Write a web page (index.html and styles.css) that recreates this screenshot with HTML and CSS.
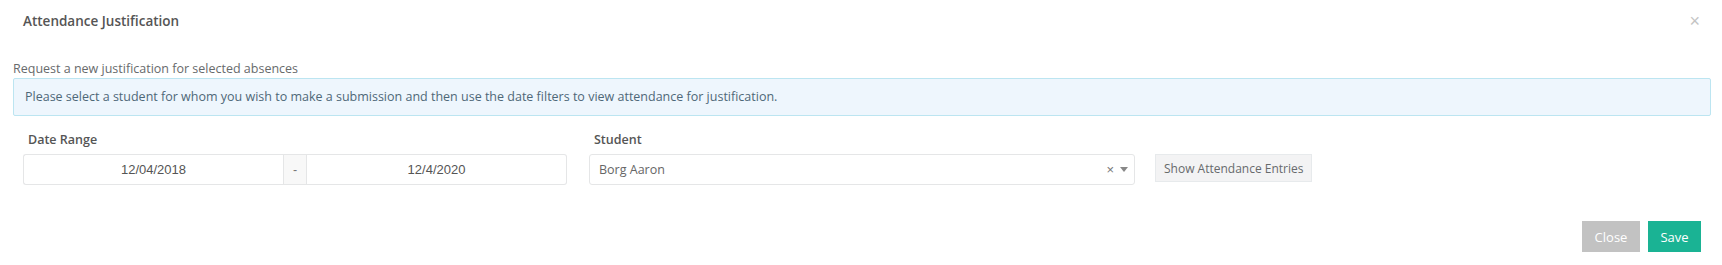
FILE: index.html
```html
<!DOCTYPE html>
<html lang="en">
<head>
<meta charset="utf-8">
<title>Attendance Justification</title>
<link rel="stylesheet" href="styles.css">
</head>
<body>
<div class="modal">
  <div class="modal-header">
    <h4 class="modal-title">Attendance Justification</h4>
    <span class="modal-close">&times;</span>
  </div>
  <div class="modal-body">
    <p class="intro">Request a new justification for selected absences</p>
    <div class="alert">Please select a student for whom you wish to make a submission and then use the date filters to view attendance for justification.</div>
    <div class="row">
      <div class="col">
        <label class="field-label">Date Range</label>
        <div class="date-group">
          <div class="date-input">12/04/2018</div>
          <div class="date-sep">-</div>
          <div class="date-input">12/4/2020</div>
        </div>
      </div>
      <div class="col">
        <label class="field-label">Student</label>
        <div class="select">
          <span class="select-value">Borg Aaron</span>
          <span class="select-clear">&times;</span>
          <span class="select-arrow"></span>
        </div>
      </div>
      <div class="col col-btn">
        <button class="btn-show">Show Attendance Entries</button>
      </div>
    </div>
  </div>
  <div class="modal-footer">
    <button class="btn btn-close">Close</button>
    <button class="btn btn-save">Save</button>
  </div>
</div>
</body>
</html>
```

FILE: styles.css
```css
* { box-sizing: border-box; }
body {
  margin: 0;
  background: #ffffff;
  font-family: "Open Sans", "Noto Sans", sans-serif;
  font-size: 12.5px;
  color: #676a6c;
}
.modal { width: 1722px; height: 265px; }
.modal-header {
  display: flex;
  justify-content: space-between;
  align-items: flex-start;
  padding: 11px 22px 0 23px;
  height: 60px;
}
.modal-title {
  margin: 0;
  font-size: 13.5px;
  line-height: 20px;
  font-weight: 600;
  color: #555555;
}
.modal-close {
  font-family: "Liberation Sans", Arial, sans-serif;
  font-size: 18px;
  line-height: 20px;
  color: #c4c4c4;
  margin-top: 0;
}
.modal-body { padding: 0 11px 0 13px; }
.intro {
  margin: 0;
  line-height: 18px;
  color: #676a6c;
}
.alert {
  background: #eef6fd;
  border: 1px solid #bce5f1;
  border-radius: 2px;
  padding: 9px 11px;
  line-height: 18px;
  color: #4e6878;
}
.row {
  display: flex;
  margin-top: 15px;
}
.col {
  width: 566px;
  padding: 0 10px;
  display: flex;
  flex-direction: column;
}
.col-btn { padding-top: 23px; align-items: flex-start; }
.field-label {
  display: block;
  padding-left: 5px;
  font-weight: 600;
  line-height: 18px;
  color: #555555;
  margin-bottom: 5px;
}
.date-group {
  display: flex;
  height: 31px;
  width: 544px;
}
.date-input {
  width: 260px;
  border: 1px solid #e5e6e7;
  background: #fff;
  display: flex;
  align-items: center;
  justify-content: center;
  font-family: "Liberation Sans", Arial, sans-serif;
  font-size: 13px;
  color: #555555;
}
.date-input:first-child { border-radius: 3px 0 0 3px; border-right: none; }
.date-input:last-child { border-radius: 0 3px 3px 0; border-left: none; }
.date-sep {
  width: 24px;
  background: #f8f8f8;
  border: 1px solid #e5e6e7;
  display: flex;
  align-items: center;
  justify-content: center;
  font-family: "Liberation Sans", Arial, sans-serif;
  color: #777;
}
.select {
  display: flex;
  align-items: center;
  height: 31px;
  border: 1px solid #e5e6e7;
  border-radius: 3px;
  background: #fff;
  padding: 0 4px 0 9px;
  color: #666666;
}
.select-value { flex: 1; }
.select-clear {
  font-family: "Liberation Sans", Arial, sans-serif;
  font-size: 13px;
  color: #777;
  margin-right: 6px;
  line-height: 1;
}
.select-arrow {
  width: 0; height: 0;
  border-left: 4px solid transparent;
  border-right: 4px solid transparent;
  border-top: 5px solid #888;
  margin-right: 2px;
}
.btn-show {
  height: 28px;
  padding: 0 8px;
  background: #f3f3f4;
  border: 1px solid #e7eaec;
  border-radius: 0;
  font-family: "Open Sans", "Noto Sans", sans-serif;
  font-size: 12px;
  color: #676a6c;
}
.modal-footer {
  display: flex;
  justify-content: flex-end;
  gap: 8px;
  padding: 36px 21px 0 0;
}
.btn {
  height: 31px;
  border: none;
  border-radius: 0;
  font-family: "Open Sans", "Noto Sans", sans-serif;
  font-size: 13px;
  color: #fff;
}
.btn-close { width: 58px; background: #c2c2c2; }
.btn-save { width: 53px; background: #1ab394; }
```
